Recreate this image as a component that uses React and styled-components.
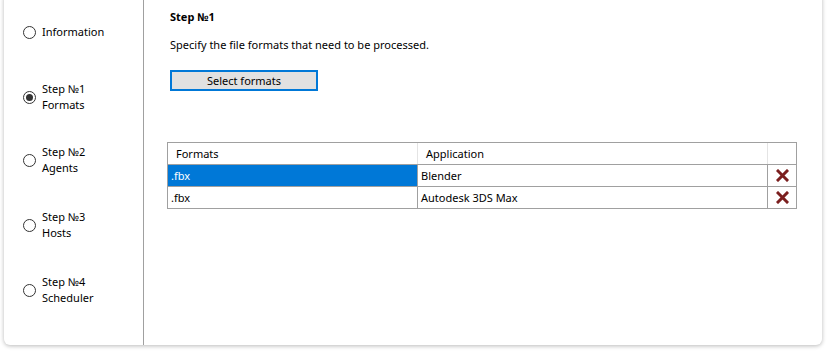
import React from "react";
import styled, { createGlobalStyle } from "styled-components";

const GlobalStyle = createGlobalStyle`
  html, body {
    margin: 0;
    padding: 0;
    background: #ffffff;
    font-family: "Noto Sans", "Open Sans", sans-serif;
    font-size: 11px;
    color: #000;
  }
`;

const steps = [
  { id: "info", lines: ["Information"] },
  { id: "s1", lines: ["Step №1", "Formats"], checked: true },
  { id: "s2", lines: ["Step №2", "Agents"] },
  { id: "s3", lines: ["Step №3", "Hosts"] },
  { id: "s4", lines: ["Step №4", "Scheduler"] },
];

const rows = [
  { format: ".fbx", app: "Blender", selected: true },
  { format: ".fbx", app: "Autodesk 3DS Max" },
];

const CrossIcon = () => (
  <svg width="13" height="13" viewBox="0 0 13 13">
    <path d="M2 2 L11 11 M11 2 L2 11" stroke="#7b1f1f" strokeWidth="3" strokeLinecap="square" />
  </svg>
);

const App = () => {
  return (
    <Page>
      <GlobalStyle />
      <Card>
        <Sidebar>
          {steps.map((s) => (
            <StepItem key={s.id}>
              <Radio checked={s.checked} />
              <StepLabel>
                {s.lines.map((l) => (
                  <div key={l}>{l}</div>
                ))}
              </StepLabel>
            </StepItem>
          ))}
        </Sidebar>
        <Content>
          <Title>Step №1</Title>
          <Description>Specify the file formats that need to be processed.</Description>
          <SelectButton>Select formats</SelectButton>
          <Table>
            <HeaderRow>
              <HeadCell>Formats</HeadCell>
              <HeadCell>Application</HeadCell>
              <HeadCell />
            </HeaderRow>
            {rows.map((r, i) => (
              <Row key={i}>
                <Cell selected={r.selected}>{r.format}</Cell>
                <Cell>{r.app}</Cell>
                <IconCell>
                  <CrossIcon />
                </IconCell>
              </Row>
            ))}
          </Table>
        </Content>
      </Card>
    </Page>
  );
};
export default App;

const Page = styled.div`
  width: 827px;
  height: 351px;
  overflow: hidden;
  padding: 0 5px 0 4px;
  box-sizing: border-box;
`;

const Card = styled.div`
  margin-top: -8px;
  height: 353px;
  background: #fff;
  border-radius: 6px;
  box-shadow: 0 1px 4px rgba(0, 0, 0, 0.28);
  display: flex;
`;

const Sidebar = styled.div`
  width: 140px;
  flex-shrink: 0;
  border-right: 1px solid #a0a0a0;
  padding: 5px 0 0 19px;
  box-sizing: border-box;
  display: grid;
  grid-template-rows: 69px 61px 65px 65px 65px;
  align-content: start;
`;

const StepItem = styled.div`
  display: flex;
  align-items: center;
  gap: 6px;
`;

const Radio = styled.span`
  width: 13px;
  height: 13px;
  margin-top: 1px;
  border: 1px solid #333;
  border-radius: 50%;
  box-sizing: border-box;
  display: flex;
  align-items: center;
  justify-content: center;
  flex-shrink: 0;
  &::after {
    content: "";
    width: 7px;
    height: 7px;
    border-radius: 50%;
    background: ${(p) => (p.checked ? "#333" : "transparent")};
  }
`;

const StepLabel = styled.div`
  line-height: 16px;
  color: #000;
`;

const Content = styled.div`
  flex: 1;
  padding: 17px 25px 0 23px;
  display: flex;
  flex-direction: column;
  align-items: flex-start;
`;

const Title = styled.div`
  font-weight: bold;
  line-height: 16px;
  margin-left: 3px;
`;

const Description = styled.div`
  margin: 12px 0 0 3px;
  line-height: 16px;
`;

const SelectButton = styled.button`
  margin: 17px 0 0 3px;
  width: 148px;
  height: 21px;
  border: 2px solid #0078d7;
  background: #e1e1e1;
  font-family: inherit;
  font-size: 11px;
  padding: 0;
  line-height: 14px;
  color: #000;
`;

const Table = styled.div`
  margin-top: 51px;
  width: 630px;
  border: 1px solid #a0a0a0;
  box-sizing: border-box;
`;

const HeaderRow = styled.div`
  display: grid;
  grid-template-columns: 250px 350px 1fr;
  height: 21px;
  border-bottom: 1px solid #a0a0a0;
`;

const HeadCell = styled.div`
  padding-left: 8px;
  line-height: 21px;
  border-right: 1px solid #e4e4e4;
  &:last-child {
    border-right: none;
  }
`;

const Row = styled.div`
  display: grid;
  grid-template-columns: 250px 350px 1fr;
  height: 21px;
  border-bottom: 1px solid #a0a0a0;
  &:last-child {
    border-bottom: none;
  }
`;

const Cell = styled.div`
  padding-left: 3px;
  line-height: 21px;
  border-right: 1px solid #a0a0a0;
  background: ${(p) => (p.selected ? "#0078d7" : "transparent")};
  color: ${(p) => (p.selected ? "#fff" : "#000")};
`;

const IconCell = styled.div`
  display: flex;
  align-items: center;
  justify-content: center;
  padding-left: 1px;
`;
